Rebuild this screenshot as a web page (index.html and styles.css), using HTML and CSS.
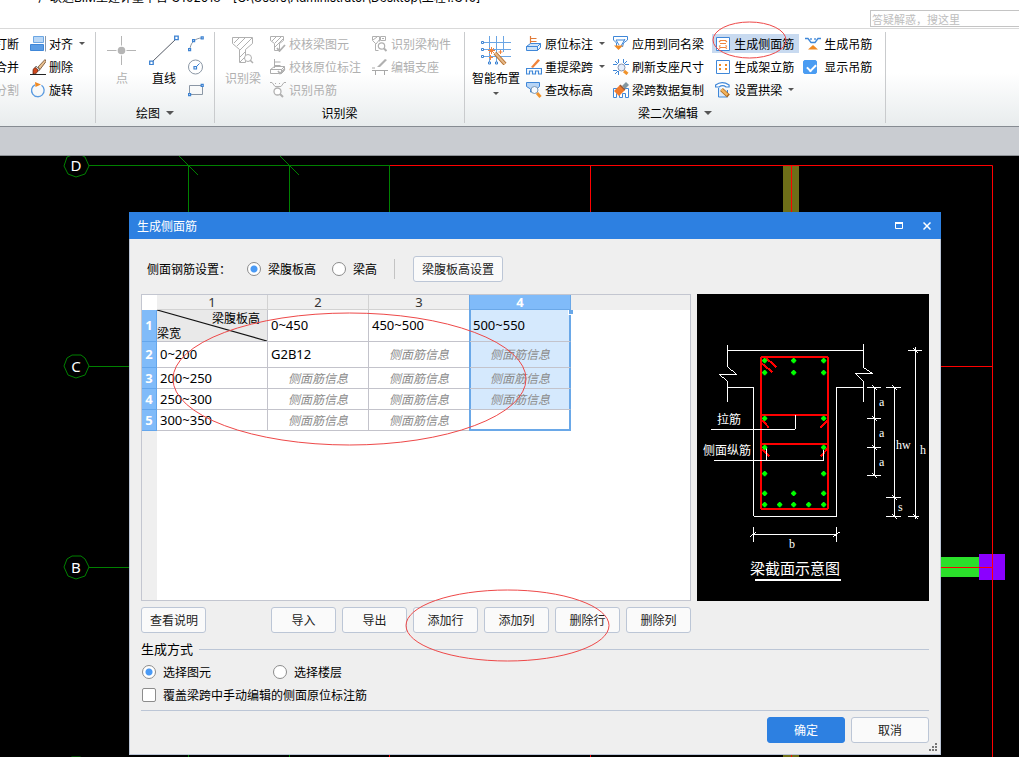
FILE: index.html
```html
<!DOCTYPE html>
<html lang="zh-CN">
<head>
<meta charset="utf-8">
<title>广联达BIM土建计量平台 GTJ2018</title>
<link rel="stylesheet" href="styles.css">
</head>
<body>
<header class="titlebar">
  <div class="app-title">广联达BIM土建计量平台 GTJ2018 - [C:\Users\Administrator\Desktop\工程1.GTJ]</div>
  <input class="search" type="text" aria-label="搜索" placeholder="答疑解惑，搜这里">
</header>

<nav class="ribbon">
  <section class="group group-modify">
    <div class="tools">
      <div class="col col-cut">
        <button class="tool">打断</button>
        <button class="tool">合并</button>
        <button class="tool" disabled>分割</button>
      </div>
      <div class="col">
        <button class="tool"><svg class="icon" viewBox="0 0 16 16"><path d="M3.5.5h10v6h-10z" fill="#b9d7f6" stroke="#6ba6e3"/><path d="M.5 8.500h13v6H.5z" fill="#5a9ce4" stroke="#3f87d8"/><path d="M15.500 0v15.500" stroke="#8a99ab"/></svg>对齐<i class="caret"></i></button>
        <button class="tool"><svg class="icon" viewBox="0 0 16 16"><path d="M8 8l7-7.500 1 2-6 8z" fill="#e9c08e" stroke="#6b4a2c" stroke-width=".8"/><path d="M6 7l4 4-2 1-3-3z" fill="#e8e8e8" stroke="#555" stroke-width=".7"/><path d="M3 11c1-3 3-3 5 0 0 3-3 4-5 4z" fill="#d0471c" stroke="#552211" stroke-width=".7"/><path d="M0 15.500h16" stroke="#222"/></svg>删除</button>
        <button class="tool"><svg class="icon" viewBox="0 0 16 16"><path d="M11.500 3.300a6.300 6.300 0 1 1-6.500-.5" fill="none" stroke="#5b9be0" stroke-width="1.300"/><path d="M5 0l6 2.500L5.500 5z" fill="#f08a24"/></svg>旋转</button>
      </div>
    </div>
  </section>

  <section class="group group-draw">
    <div class="tools">
      <button class="big" disabled><svg class="icon-big" viewBox="0 0 30 30"><path d="M0 15.500h29M14.500 1v29" stroke="#b5b5b5"/><circle cx="14.500" cy="15.500" r="5" fill="#fff"/><circle cx="14.500" cy="15.500" r="3.800" fill="#b5b5b5"/></svg>点</button>
      <button class="big"><svg class="icon-big" viewBox="0 0 30 30"><path d="M3 27L27 4" stroke="#555b66"/><path d="M.7 26.200h3.500v3.500H.7zM25.700 1.200h3.500v3.500h-3.500z" fill="#fff" stroke="#3c82d2" stroke-width="1.300"/></svg>直线</button>
      <div class="col">
        <button class="tool" aria-label="弧"><svg class="icon" viewBox="0 0 16 16"><path d="M2 14C2 7 7 2 14 2" fill="none" stroke="#8b97a5"/><path d="M.6 12.600h2v2h-2zM4.600 3.600h2v2h-2zM13.200.8h2v2h-2z" fill="#fff" stroke="#3c82d2" stroke-width="1.200"/></svg></button>
        <button class="tool" aria-label="圆"><svg class="icon" viewBox="0 0 16 16"><circle cx="7.500" cy="8" r="7" fill="none" stroke="#8b97a5"/><path d="M7 9l4.500-4.500" stroke="#3c82d2"/><path d="M6 7.500h2.500V10H6z" fill="#fff" stroke="#3c82d2" stroke-width="1.200"/></svg></button>
        <button class="tool" aria-label="矩形"><svg class="icon" viewBox="0 0 16 16"><path d="M1.500 3.500h13v9h-13z" fill="none" stroke="#8b97a5"/><path d="M.6 11.600h2v2h-2zM13.200 2.400h2v2h-2z" fill="#fff" stroke="#3c82d2" stroke-width="1.200"/></svg></button>
      </div>
    </div>
    <div class="group-label">绘图<i class="caret caret-wide"></i></div>
  </section>

  <section class="group group-detect">
    <div class="tools">
      <button class="big" disabled><svg class="icon-big" viewBox="0 0 30 30"><path d="M4.500 2.500h20v6l-7 6v13h-6v-13l-7-6zM6 8l5-5M9 11l8-8M11 16L24 3M12 22l5-5M12 27l5-5" fill="none" stroke="#b0b0b0"/><circle cx="20" cy="23" r="3.500" fill="#fff" stroke="#b0b0b0"/><path d="M22 25l3 3" stroke="#b0b0b0" stroke-width="1.500"/></svg>识别梁</button>
      <div class="col">
        <button class="tool" disabled><svg class="icon" viewBox="0 0 16 16"><path d="M.5.500h13v4l-4 3v7h-5v-7l-4-3zM2 5l4-4M5 7l6-6M5 11l8-8" fill="none" stroke="#b0b0b0"/><path d="M7 12l2.500 3L15 9" fill="none" stroke="#b0b0b0" stroke-width="1.800"/></svg>校核梁图元</button>
        <button class="tool" disabled><svg class="icon" viewBox="0 0 16 16"><path d="M4.500 0v9M4.500 3h6M4.500 6.500h6M.5 10.500l4-3h10l-3 3zM.5 10.500h11v4H.5zM11.500 14.500l3-3v-4" fill="none" stroke="#adadad"/><path d="M8 12l2 2.500 5-5" fill="none" stroke="#b0b0b0" stroke-width="1.600"/></svg>校核原位标注</button>
        <button class="tool" disabled><svg class="icon" viewBox="0 0 16 16"><path d="M0 .5h2l3 4h6l3-4h2M5 1.500h1M9 1.500h1" fill="none" stroke="#b0b0b0"/><circle cx="7.500" cy="9.500" r="3.500" fill="#fff" stroke="#b0b0b0" stroke-width="1.300"/><path d="M10 12l3 3" stroke="#b0b0b0" stroke-width="2"/></svg>识别吊筋</button>
      </div>
      <div class="col col-next">
        <button class="tool" disabled><svg class="icon" viewBox="0 0 16 16"><path d="M.5.500h7v5M.5.500v4l3 3v7h3M1 4l4-3M4 8l4-5" fill="none" stroke="#b0b0b0"/><path d="M8.500.500h5v4h-5zM10 2.500h2" fill="none" stroke="#b0b0b0"/><circle cx="9.500" cy="10" r="3.200" fill="#fff" stroke="#b0b0b0" stroke-width="1.200"/><path d="M12 12.500l2.500 2.500" stroke="#b0b0b0" stroke-width="2"/></svg>识别梁构件</button>
        <button class="tool" disabled><svg class="icon" viewBox="0 0 16 16"><path d="M5 8l8-8 2 1-7 7z" fill="#b0b0b0"/><path d="M0 9h3M2 11.500h14M3.500 11v5M12.500 11v5M0 11.500h2" stroke="#a8a8a8"/></svg>编辑支座</button>
      </div>
    </div>
    <div class="group-label">识别梁</div>
  </section>

  <section class="group group-edit">
    <div class="tools">
      <button class="big"><svg class="icon-big" viewBox="0 0 30 30"><path d="M3 7.500h27M3 14.500h27M3 21.500h27M8.500 1v26M15.500 1v26M22.500 1v16" stroke="#6aa5e4"/><path d="M.5 6.500h2v2h-2zM.5 13.500h2v2h-2zM.5 20.500h2v2h-2zM7.500 27h2v2h-2zM14.500 27h2v2h-2z" fill="#fff" stroke="#3c82d2"/><path d="M14 18l10 11" stroke="#b5702f" stroke-width="4"/><path d="M14 18l10 11" stroke="#e6b98a" stroke-width="2"/><path d="M8 13l5 5M13 13l-5 5M10.500 12v7M7 15.500h7M8 22.500h4M9.500 20v5M19.500 15v4M17.500 17h4" stroke="#f0843c"/></svg>智能布置<i class="caret"></i></button>
      <div class="col">
        <button class="tool"><svg class="icon" viewBox="0 0 16 16"><path d="M4.500 0v8M4.500 2.500h6M4.500 5.500h6" stroke="#e07b39" stroke-width="1.200"/><path d="M.5 10.500l4-3h10l-3 3zM.5 10.500h11v4H.5zM11.500 14.500l3-3v-4" fill="#cfe3f8" stroke="#3f87d8"/></svg>原位标注<i class="caret"></i></button>
        <button class="tool"><svg class="icon" viewBox="0 0 16 16"><path d="M5 8l7-8 2 1.500-7 7.500z" fill="#f0843c"/><path d="M.5 15v-5.500h15V15h-3v-3h-3v3h-3v-3h-3v3z" fill="#fff" stroke="#3f87d8" stroke-width="1.200"/></svg>重提梁跨<i class="caret"></i></button>
        <button class="tool"><svg class="icon" viewBox="0 0 16 16"><path d="M.5.500h13v4l-3 2.500v3h-6V7l-4-2.500z" fill="#b7d4f4" stroke="#3f87d8"/><circle cx="8.500" cy="8" r="3.500" fill="#f6faff" stroke="#7b97b5"/><path d="M11 11l3.500 4" stroke="#f0932c" stroke-width="3"/></svg>查改标高</button>
      </div>
      <div class="col col-next">
        <button class="tool"><svg class="icon" viewBox="0 0 16 16"><path d="M.5.500h14v3.500l-4 3-1 4M.5.500V4l3 3v3M3 4l3 5M12 3L8 10M3 4h9" fill="none" stroke="#3f87d8"/><path d="M1 9.500h9L5.500 14z" fill="#f08a24"/></svg>应用到同名梁</button>
        <button class="tool"><svg class="icon" viewBox="0 0 16 16"><path d="M5.500 0v4M10.500 0v4M0 5.500h4M0 11.500h4M12 5.500h4M5.500 12v4M2 2l3 3M14 2l-3 3M2 15l3-3" fill="none" stroke="#3f87d8"/><circle cx="8.500" cy="8.500" r="3.500" fill="#e4edfb" stroke="#8a94ad"/><path d="M11 12l3.500 3" stroke="#f0932c" stroke-width="3"/></svg>刷新支座尺寸</button>
        <button class="tool"><svg class="icon" viewBox="0 0 16 16"><path d="M.5 15.500v-9h15v9h-3v-4h-3v4h-3v-4h-3v4z" fill="#fff" stroke="#3f87d8"/><path d="M9 4l4-4 3 3-4 4z" fill="#8296a0"/><path d="M1 9l6-6 5 5-6 6z" fill="#f07b2c"/><path d="M7 3l5 5" stroke="#9a5b36" stroke-width="1.500"/></svg>梁跨数据复制</button>
      </div>
      <div class="col col-next col-side">
        <button class="tool active"><svg class="icon" viewBox="0 0 16 16"><path d="M1.500 1.500h13v13h-13z" fill="#fff" stroke="#3f87d8"/><path d="M4 6l1.500-1.500h5L12 6M5 7.500h6M4 10.500L5.500 9.500M12 10.500l-1.500-1M4 12.500l1.500-1h5l1.500 1" fill="none" stroke="#f0843c" stroke-width="1.200"/></svg>生成侧面筋</button>
        <button class="tool"><svg class="icon" viewBox="0 0 16 16"><path d="M1.500 1.500h13v13h-13z" fill="#fff" stroke="#3f87d8"/><path d="M4 5h2v2H4zM10 5h2v2h-2zM4 9h2v2H4zM10 9h2v2h-2z" fill="#f08a24"/></svg>生成架立筋</button>
        <button class="tool"><svg class="icon" viewBox="0 0 16 16"><path d="M.6 5V3c4-3 9-3 13.500 0v2h-3c-2-1.500-5-1.500-7 0z" fill="#fff" stroke="#3f87d8" stroke-width="1.200"/><path d="M3.500 6v9h9V8" fill="#dceafa" stroke="#3f87d8"/><path d="M6.500 7.500l7 6.500" stroke="#a8671f" stroke-width="4"/><path d="M6.500 7.500l6 5.500" stroke="#f3b35c" stroke-width="2.400"/></svg>设置拱梁<i class="caret"></i></button>
      </div>
      <div class="col">
        <button class="tool"><svg class="icon" viewBox="0 0 16 16"><path d="M0 2.500h3l3 4h4l3-4h3M6 2v2M10 2v2" fill="none" stroke="#3f87d8" stroke-width="1.300"/><path d="M8 9l5 4.500H3z" fill="#f08a24"/></svg>生成吊筋</button>
        <label class="tool"><input class="box box-blue" type="checkbox" checked>显示吊筋</label>
      </div>
    </div>
    <div class="group-label">梁二次编辑<i class="caret caret-wide"></i></div>
  </section>
</nav>

<div class="strip"></div>

<main class="workspace">
  <svg class="plan" aria-hidden="true">
    <g fill="none" stroke="#008000">
      <path d="M89 9.500h301M188.500 10v800M289.500 10v800M389.500 10v400M179 0l19 19M280 0l19 19M89 210.500h200M89 411.500h200"/>
      <path d="M67 1l-3 9 4 8 8 3 9-3 4-8-4-9-4-2h-9zM72 199l-5 3-3 8 4 9 8 3 9-3 4-9-4-8-4-3zM72 400l-5 3-3 8 4 9 8 3 9-3 4-9-4-8-4-3zM67 603l5-2h8l5 2"/>
    </g>
    <path d="M783 10h16v800h-16z" fill="#6e6e18"/>
    <path d="M941 401h38v20h-38z" fill="#2be02b"/>
    <path d="M979 398h26v26h-26z" fill="#8b00ff"/>
    <path d="M390 9.500h602.500v800M389.500 410v400M590.500 10v800M791.500 10v800M800 210.500h193M800 411.500h193" fill="none" stroke="#f00"/>
    <g fill="#fff" font-size="15" text-anchor="middle"><text x="76" y="15">D</text><text x="76" y="216">C</text><text x="76" y="417">B</text></g>
  </svg>

  <section class="dialog" role="dialog" aria-labelledby="dlg-title">
    <header class="dlg-head">
      <h1 id="dlg-title">生成侧面筋</h1>
      <button aria-label="最大化"><svg viewBox="0 0 8 8"><path d="M.5 1v5.500h7V1" fill="none" stroke="#fff"/><path d="M0 1h8" stroke="#fff" stroke-width="2"/></svg></button>
      <button aria-label="关闭"><svg viewBox="0 0 8 8"><path d="M.5.500l7 7M7.500.500l-7 7" stroke="#fff" stroke-width="1.500"/></svg></button>
    </header>
    <div class="dlg-body">
      <div class="settings">
        <span class="settings-title">侧面钢筋设置：</span>
        <label class="opt"><input class="radio" type="radio" name="kind" checked>梁腹板高</label>
        <label class="opt"><input class="radio" type="radio" name="kind">梁高</label>
        <i class="divider"></i>
        <button class="btn">梁腹板高设置</button>
      </div>

      <div class="main-row">
        <div class="sheet">
          <table>
            <colgroup><col class="c-head"><col class="c-first"><col class="c-data"><col class="c-data"><col class="c-data"></colgroup>
            <thead><tr><th class="corner"></th><th>1</th><th>2</th><th>3</th><th class="sel-head">4</th></tr></thead>
            <tbody>
              <tr class="r-title"><th>1</th><td class="diag"><svg preserveAspectRatio="none" viewBox="0 0 110 31"><path d="M0 0l110 31" stroke="#111" stroke-width="1.200"/></svg><div class="diag-top">梁腹板高</div><div class="diag-bottom">梁宽</div></td><td>0~450</td><td>450~500</td><td class="sel">500~550<i class="handle"></i></td></tr>
              <tr class="r-tall"><th>2</th><td>0~200</td><td>G2B12</td><td class="hint">侧面筋信息</td><td class="sel hint">侧面筋信息</td></tr>
              <tr><th>3</th><td>200~250</td><td class="hint">侧面筋信息</td><td class="hint">侧面筋信息</td><td class="sel hint">侧面筋信息</td></tr>
              <tr><th>4</th><td>250~300</td><td class="hint">侧面筋信息</td><td class="hint">侧面筋信息</td><td class="sel hint">侧面筋信息</td></tr>
              <tr><th>5</th><td>300~350</td><td class="hint">侧面筋信息</td><td class="hint">侧面筋信息</td><td class="sel sel-last"></td></tr>
            </tbody>
          </table>
        </div>
        <svg class="section-view" viewBox="0 0 232 307" role="img" aria-label="梁截面示意图">
          <g transform="translate(-2 -4) scale(.33333)" fill="none" stroke="#fff" stroke-width="3" shape-rendering="crispEdges">
            <path d="M98 181.500h407M97.500 165v66l28 22-53 1 25 19v62M505.500 163v69l28 19-53-1 25 23v62M98 292.500h78v387h249v-387h80"/>
            <path d="M175.500 711v44M424.500 711v44M165 740l19-14M176 733.500h249M415 740l19-14"/>
            <path d="M516 292.500h42M573 292.500h45M516 385.500h42M516 472.500h42M516 556.500h42M538.500 292v265M598.500 292v388M573 622.500h45M573 679.500h45M661.500 172v515M639 181.500h41M639 679.500h33"/>
            <path d="M530 285l16 14M530 378l16 14M530 465l16 14M530 549l16 14M590 285l16 14M590 615l16 14M590 672l16 14M653 174l16 14M653 672l16 14"/>
            <path d="M198 206v446q0 5 5 5h192q5 0 5-5V206q0-5-5-5H203q-5 0-5 5zM198 375h202M198 462h202M200 220l32 26M214 205l30 26M202 391l20 22M397 391l-20 22M202 477l20 22M397 477l-20 22" stroke="#f00" stroke-width="6"/>
            <path d="M48 418.500h253v-43M57 511.500h329v-34M214.500 475v36"/>
            <path d="M180 870h258" stroke-width="6"/>
          </g>
          <g transform="translate(-2 -4) scale(.33333)" fill="#0f0">
            <path id="bar" d="M206 204h6v3h3v3h2v4h-2v3h-3v3h-6v-3h-3v-3h-2v-4h2v-3h3z"/>
            <use href="#bar" x="87"/><use href="#bar" x="177"/>
            <use href="#bar" y="36"/><use href="#bar" x="87" y="36"/><use href="#bar" x="177" y="36"/>
            <use href="#bar" y="173"/><use href="#bar" x="177" y="173"/>
            <use href="#bar" y="260"/><use href="#bar" x="177" y="260"/>
            <use href="#bar" y="339"/><use href="#bar" x="177" y="339"/>
            <use href="#bar" y="398"/><use href="#bar" x="87" y="398"/><use href="#bar" x="177" y="398"/>
            <use href="#bar" y="432"/><use href="#bar" x="45" y="432"/><use href="#bar" x="87" y="432"/><use href="#bar" x="132" y="432"/><use href="#bar" x="177" y="432"/>
          </g>
          <g fill="#fff" font-size="12">
            <text x="20" y="130">拉筋</text><text x="6" y="161">侧面纵筋</text><text x="53" y="280" font-size="15">梁截面示意图</text>
          </g>
          <g class="dims" fill="#fff" font-size="12">
            <text x="182" y="112">a</text><text x="182" y="143">a</text><text x="182" y="172">a</text><text x="199" y="155">hw</text><text x="223" y="160">h</text><text x="201" y="217">s</text><text x="92" y="254">b</text>
          </g>
        </svg>
      </div>

      <div class="actions">
        <button class="btn">查看说明</button>
        <button class="btn push">导入</button>
        <button class="btn">导出</button>
        <button class="btn">添加行</button>
        <button class="btn">添加列</button>
        <button class="btn">删除行</button>
        <button class="btn">删除列</button>
      </div>

      <h2 class="mode-title">生成方式</h2>
      <div class="modes">
        <label class="opt"><input class="radio" type="radio" name="mode" checked>选择图元</label>
        <label class="opt"><input class="radio" type="radio" name="mode">选择楼层</label>
      </div>
      <label class="opt cover"><input class="box" type="checkbox">覆盖梁跨中手动编辑的侧面原位标注筋</label>

      <footer class="dlg-foot">
        <button class="btn primary">确定</button>
        <button class="btn">取消</button>
      </footer>
    </div>
    <svg class="grip" viewBox="0 0 8 8" aria-hidden="true"><path d="M6 0h2v2H6zM3 3h2v2H3zM6 3h2v2H6zM0 6h2v2H0zM3 6h2v2H3zM6 6h2v2H6z" fill="#777"/></svg>
  </section>
</main>

<svg class="marks" aria-hidden="true">
  <ellipse cx="749.500" cy="40" rx="36.500" ry="18"/>
  <ellipse cx="349.500" cy="379" rx="176.500" ry="66"/>
  <ellipse cx="507.500" cy="625.500" rx="101.500" ry="35.500"/>
</svg>
</body>
</html>
```
FILE: styles.css
```css
* { box-sizing: border-box; }

body {
  margin: 0;
  height: 100vh;
  overflow: hidden;
  position: relative;
  display: flex;
  flex-direction: column;
  background: #fff;
  color: #000;
  font: 12px/16px "Noto Sans CJK SC", "Noto Sans", sans-serif;
}

button, input { font: inherit; color: inherit; }
button { margin: 0; padding: 0; border: 0; background: none; }

/* title bar */
.titlebar {
  flex: none;
  height: 28px;
  display: flex;
  justify-content: space-between;
  align-items: flex-start;
}
.app-title {
  margin: -10px 0 0 38px;
  font-family: Inter, "Noto Sans CJK SC", sans-serif;
  white-space: nowrap;
}
.search {
  width: 149px;
  height: 17px;
  margin-top: 10px;
  padding: 0 1px;
  border: 1px solid #c4c4c4;
  border-right: 0;
  background: #fff;
  font-size: 11px;
}
.search::placeholder { color: #bdbdbd; opacity: 1; }

/* ribbon */
.ribbon {
  flex: none;
  display: flex;
  height: 99px;
  padding: 3px 0;
  border-top: 1px solid #d9d9d9;
  border-bottom: 1px solid #868b92;
  background: linear-gradient(#fff 45%, #e8eced);
}
.group {
  display: flex;
  flex-direction: column;
  border-right: 1px solid #c9cbcd;
}
.tools { display: flex; height: 72px; }
.col { display: grid; grid-template-rows: repeat(3, 23px); align-content: start; }
.tool {
  display: flex;
  align-items: center;
  gap: 3px;
  white-space: nowrap;
}
.tool:disabled, .big:disabled { color: #b0b0b0; }
.icon { width: 16px; height: 16px; flex: none; }
.icon-big { width: 30px; height: 30px; display: block; margin: 3px 0 5px; }
.big { display: flex; flex-direction: column; align-items: center; white-space: nowrap; }
.caret {
  flex: none;
  margin-left: 3px;
  border: 3px solid transparent;
  border-top-color: #555;
  border-bottom: 0;
}
.big .caret { margin: 6px 0 0; }
.caret-wide { margin-left: 6px; border-width: 4px 4px 0; }
.group-label {
  display: flex;
  align-items: center;
  justify-content: center;
  height: 20px;
}
.group-modify .tools { gap: 11px; padding-right: 10px; }
.col-cut { margin-left: -5px; }
.group-draw .tools { gap: 12px; padding: 0 10px 0 11px; }
.group-draw .col { margin-left: -3px; }
.group-detect .tools { gap: 9px; padding: 0 13px 0 10px; }
.group-edit .tools { gap: 6px; padding: 0 13px 0 7px; }
.col-next { margin-left: 2px; }
.col-side .tool { padding: 0 5px 0 3px; }
.col-side .active { margin: 2px 0; background: #c8daf0; }

.strip {
  flex: none;
  height: 29px;
  background: #c9ccd1;
  border-bottom: 1px solid #8d9196;
}

/* drawing area */
.workspace {
  flex: 1;
  position: relative;
  overflow: hidden;
  padding: 56px 78px 2px 129px;
  background: #000;
}
.plan, .marks { position: absolute; left: 0; top: 0; width: 100%; height: 100%; }
.plan { font-family: "Noto Sans", sans-serif; }
.marks { pointer-events: none; fill: none; stroke: #ee4848; stroke-width: 1; }

/* dialog */
.dialog {
  position: relative;
  background: #efefef;
  border: 1px solid #bcc6d6;
  border-top: 0;
}
.dlg-head {
  display: flex;
  align-items: center;
  gap: 20px;
  height: 27px;
  margin: 0 -1px;
  padding: 0 10px 0 8px;
  background: #2d80e1;
  color: #fff;
}
.dlg-head h1 { flex: 1; margin: 0; font-size: 12px; font-weight: 400; }
.dlg-head svg { display: block; width: 8px; height: 8px; }
.dlg-body { padding: 17px 11px 11px; }

.btn {
  height: 26px;
  padding: 0 8px;
  border: 1px solid #bcc6d6;
  border-radius: 3px;
  background: #fafafa;
  color: #222;
  white-space: nowrap;
}
.primary { background: #2d80e1; border-color: #2d80e1; color: #fff; }

.opt { display: flex; align-items: center; gap: 7px; white-space: nowrap; }
.radio, .box {
  appearance: none;
  flex: none;
  width: 14px;
  height: 14px;
  margin: 0;
  border: 1px solid #8c8c8c;
  background: #fff;
}
.radio { border-radius: 50%; }
.radio:checked { background: radial-gradient(#4a9af5 0 3px, #fff 4px); }
.box { border-radius: 2px; }
.box-blue {
  margin: 0 4px 0 -2px;
  border-color: #4a9cf2;
  background: #4a9cf2;
  position: relative;
}
.box-blue::after {
  content: "";
  position: absolute;
  left: 3px;
  top: 3px;
  width: 7px;
  height: 4px;
  border: solid #fff;
  border-width: 0 0 2px 2px;
  transform: rotate(-45deg);
}

.settings { display: flex; align-items: center; padding-left: 6px; }
.settings-title { width: 100px; }
.settings .opt { margin-right: 16px; }
.divider { width: 1px; height: 20px; margin: 0 18px 0 1px; background: #c3c3c3; }

.main-row { display: flex; gap: 6px; margin-top: 12px; }
.section-view { flex: none; width: 232px; height: 307px; background: #000; }
.dims { font-family: "Liberation Serif", serif; }

/* sheet */
.sheet {
  flex: 1;
  border: 1px solid #c3c6d0;
  background:
    linear-gradient(#fff, #fff) 0 0 / 15px 15px no-repeat,
    linear-gradient(#efefef, #efefef) 0 0 / 100% 15px no-repeat,
    linear-gradient(#efefef, #efefef) 0 0 / 15px 100% no-repeat,
    #fff;
}
.sheet table {
  width: 429px;
  table-layout: fixed;
  border-collapse: separate;
  border-spacing: 0;
  font: 13px/15px "Noto Sans", "Noto Sans CJK SC", sans-serif;
}
.c-head { width: 15px; }
.c-first { width: 111px; }
.c-data { width: 101px; }
.sheet th, .sheet td {
  height: 21px;
  padding: 0 3px;
  border: solid #c3c3cb;
  border-width: 0 1px 1px 0;
  text-align: left;
}
.sheet thead th {
  height: 15px;
  padding: 0;
  border-color: #d2d2d2;
  color: #333;
  line-height: 14px;
  font-weight: 400;
  text-align: center;
}
.sheet thead .corner { border-color: transparent; }
.sheet tbody th {
  padding: 0;
  border-color: #64a6ec;
  background: #80bbf9;
  color: #fff;
  text-align: center;
}
.sheet thead .sel-head {
  background: #80bbf9;
  border-color: #6aa8e8;
  box-shadow: -1px 0 #6aa8e8;
  color: #fff;
  font-weight: 700;
}
.sheet .r-title td { height: 32px; }
.sheet .r-tall td { height: 26px; }
.sheet .hint {
  padding: 0;
  color: #8b8b8b;
  font-size: 12px;
  font-style: italic;
  text-align: center;
}
.sheet .diag { position: relative; padding: 0; background: #e9e9e9; font-size: 12px; }
.diag svg { position: absolute; left: 0; top: 0; width: 100%; height: 100%; }
.diag-top { position: relative; padding-right: 7px; text-align: right; }
.diag-bottom { position: relative; }
.sheet .sel {
  position: relative;
  background: #d5e9fd;
  border-right-color: #6aa8e8;
  box-shadow: -1px 0 #6aa8e8, inset 1px 0 #6aa8e8, inset -1px 0 #6aa8e8;
}
.sheet .sel-last {
  background: #fff;
  border-bottom-color: #6aa8e8;
  box-shadow: -1px 0 #6aa8e8, inset 1px 0 #6aa8e8, inset -1px -1px #6aa8e8;
}
.handle {
  position: absolute;
  right: -3px;
  top: 0;
  width: 5px;
  height: 5px;
  border: solid #fff;
  border-width: 0 0 1px 1px;
  background: #6aa8e8;
}

.actions { display: flex; gap: 6px; margin-top: 6px; }
.actions .btn { width: 65px; }
.actions .push { margin-left: 59px; }

.mode-title {
  display: flex;
  align-items: center;
  gap: 6px;
  margin: 7px 0 6px;
  font-size: 13px;
  line-height: 18px;
  font-weight: 400;
}
.mode-title::after { content: ""; flex: 1; height: 1px; background: #bcc6d6; }
.modes { display: flex; gap: 62px; padding-left: 1px; }
.cover { margin: 7px 0; padding-left: 1px; }
.dlg-foot {
  display: flex;
  justify-content: flex-end;
  gap: 6px;
  padding-top: 6px;
  border-top: 1px solid #bcc6d6;
}
.dlg-foot .btn { width: 78px; }
.grip { position: absolute; right: 3px; bottom: 3px; width: 8px; height: 8px; }
```
